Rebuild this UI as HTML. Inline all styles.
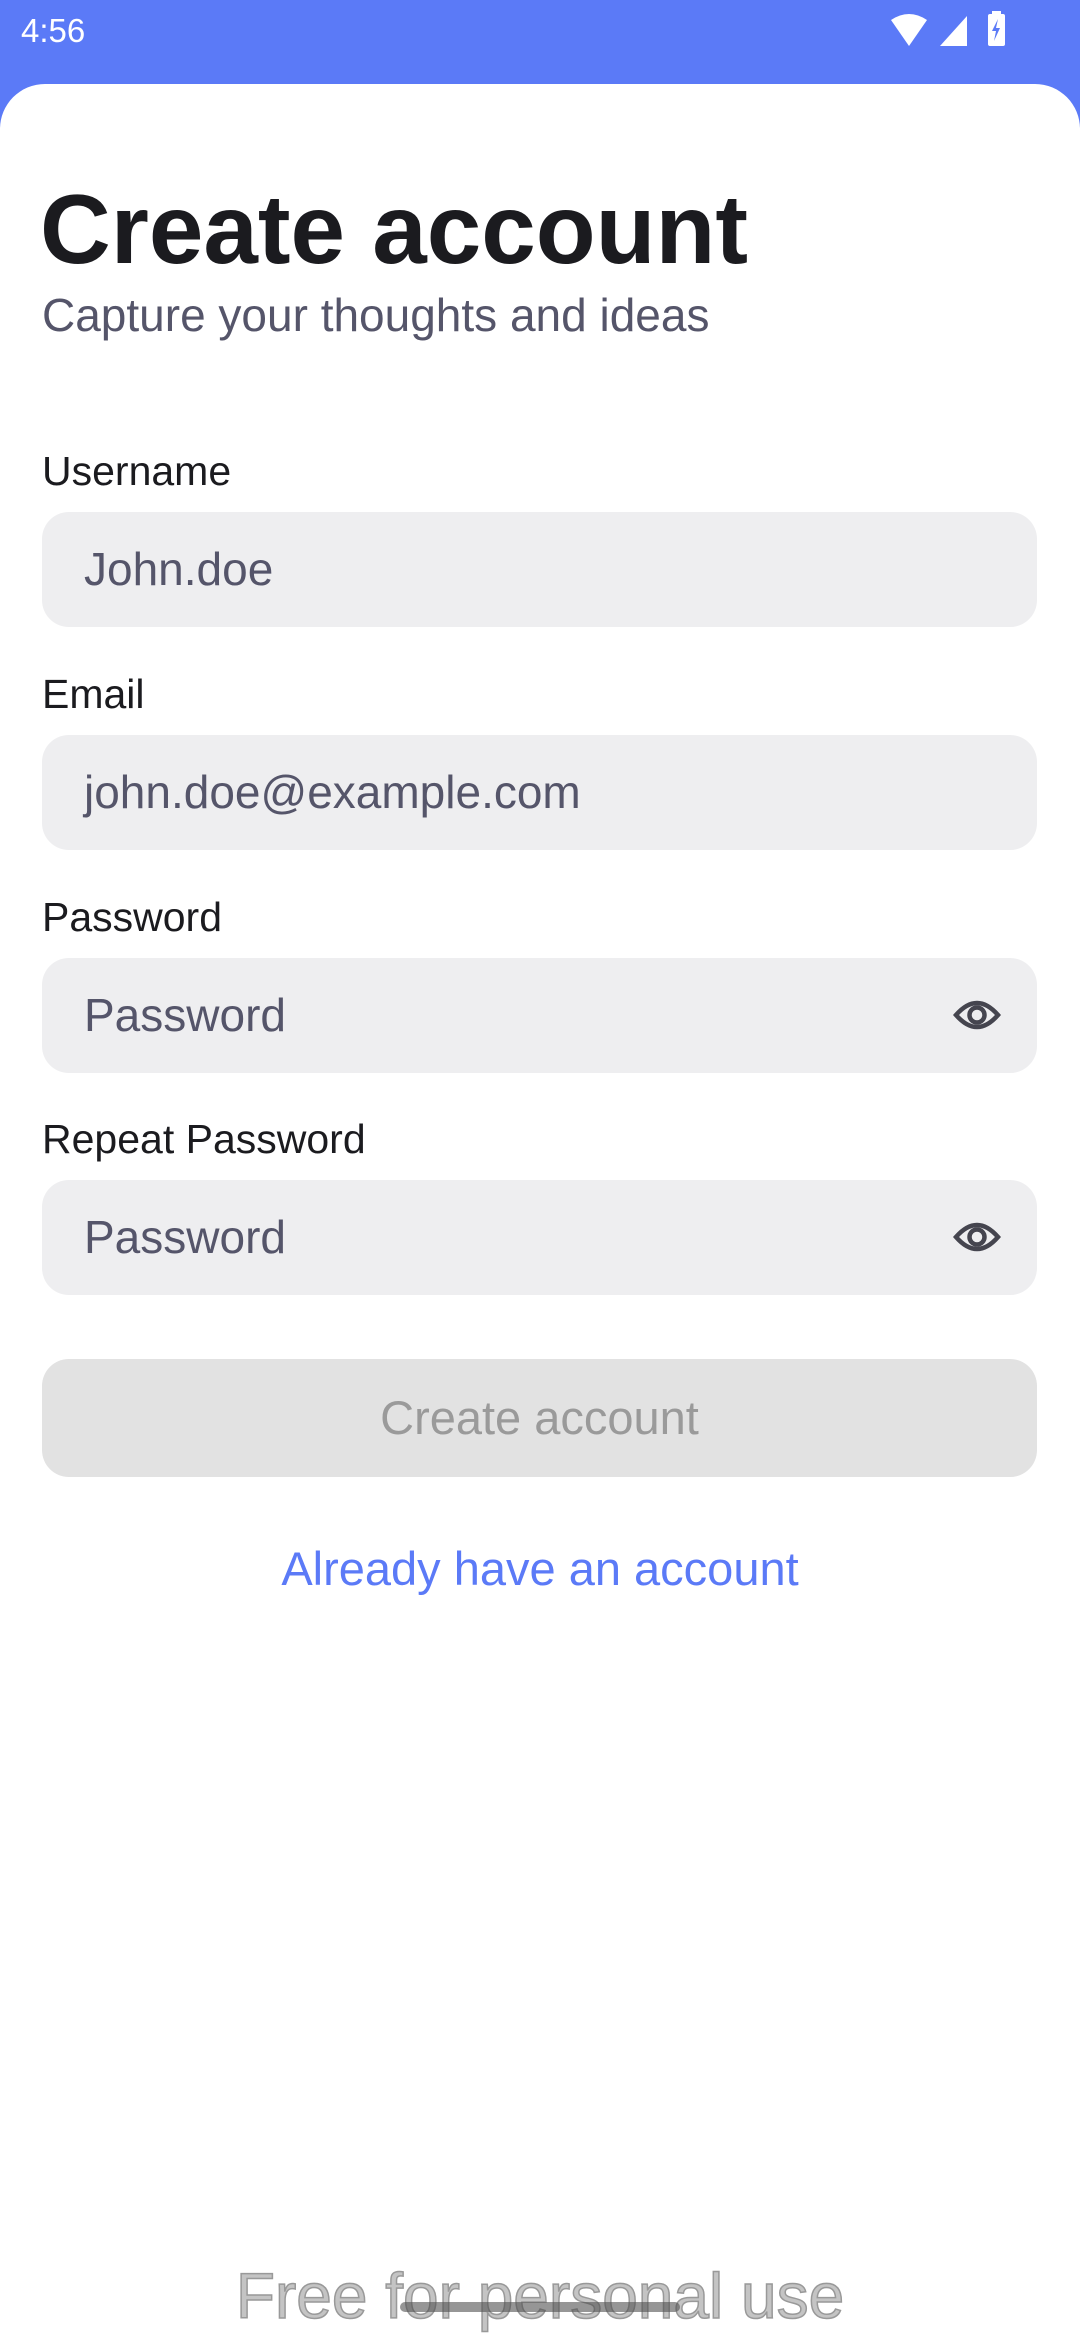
<!DOCTYPE html>
<html><head><meta charset="utf-8"><style>
*{margin:0;padding:0;box-sizing:border-box}
body{width:1080px;height:2340px;background:#5b7af7;font-family:"Liberation Sans",sans-serif;position:relative;overflow:hidden}
.card{position:absolute;left:0;top:84px;width:1080px;height:2256px;background:#fff;border-radius:45px 45px 0 0}
.abs{position:absolute}
.lbl{position:absolute;left:42px;font-size:41px;color:#1b1b1f}
.fld{position:absolute;left:42px;width:995px;height:115px;background:#eeeef0;border-radius:27px}
.ph{position:absolute;left:42px;top:0;line-height:115px;font-size:46px;color:#55556a}
.eye{position:absolute;right:36px;top:35px}
</style></head><body>
<div class="abs" style="left:21px;top:11px;font-size:33px;color:#fff;line-height:40px">4:56</div>
<svg class="abs" style="left:885px;top:10px" width="130" height="44" viewBox="0 0 130 44">
<path d="M6 10 Q24 -2 42 10 L24 36 Z" fill="#fff"/>
<path d="M82 6 L82 36 L55 36 Z" fill="#fff"/>
<rect x="103" y="4" width="17" height="32" rx="2" fill="#fff"/>
<rect x="107" y="1" width="9" height="4" fill="#fff"/>
<path d="M113 9 L107 21 L111 21 L109 31 L115 18 L111 18 Z" fill="#5b7af7"/>
</svg>
<div class="card"></div>
<div class="abs" style="left:40px;top:174px;font-size:98px;font-weight:bold;color:#1b1b1f;line-height:110px">Create account</div>
<div class="abs" style="left:42px;top:285px;font-size:46px;color:#55556a;line-height:60px">Capture your thoughts and ideas</div>

<div class="lbl" style="top:448px">Username</div>
<div class="fld" style="top:512px"><div class="ph">John.doe</div></div>
<div class="lbl" style="top:671px">Email</div>
<div class="fld" style="top:735px"><div class="ph">john.doe@example.com</div></div>
<div class="lbl" style="top:894px">Password</div>
<div class="fld" style="top:958px"><div class="ph">Password</div>
<svg class="eye" width="48" height="44" viewBox="0 0 48 44"><path d="M3 22 Q24 -2 45 22 Q24 46 3 22 Z" fill="none" stroke="#45454f" stroke-width="4.5"/><circle cx="24" cy="22" r="7.5" fill="none" stroke="#45454f" stroke-width="4.5"/></svg></div>
<div class="lbl" style="top:1116px">Repeat Password</div>
<div class="fld" style="top:1180px"><div class="ph">Password</div>
<svg class="eye" width="48" height="44" viewBox="0 0 48 44"><path d="M3 22 Q24 -2 45 22 Q24 46 3 22 Z" fill="none" stroke="#45454f" stroke-width="4.5"/><circle cx="24" cy="22" r="7.5" fill="none" stroke="#45454f" stroke-width="4.5"/></svg></div>

<div class="abs" style="left:42px;top:1359px;width:995px;height:118px;background:#e2e2e2;border-radius:27px;text-align:center;line-height:118px;font-size:47px;color:#9a9a9a">Create account</div>
<div class="abs" style="left:0;top:1539px;width:1080px;text-align:center;font-size:47px;color:#5b7af7;line-height:60px">Already have an account</div>

<div class="abs" style="left:0;top:2256px;width:1080px;text-align:center;font-size:64px;color:#c4c4c4;-webkit-text-stroke:1.5px #999;line-height:80px">Free for personal use</div>
<div class="abs" style="left:400px;top:2302px;width:280px;height:10px;border-radius:5px;background:rgba(80,80,80,0.6)"></div>
</body></html>
